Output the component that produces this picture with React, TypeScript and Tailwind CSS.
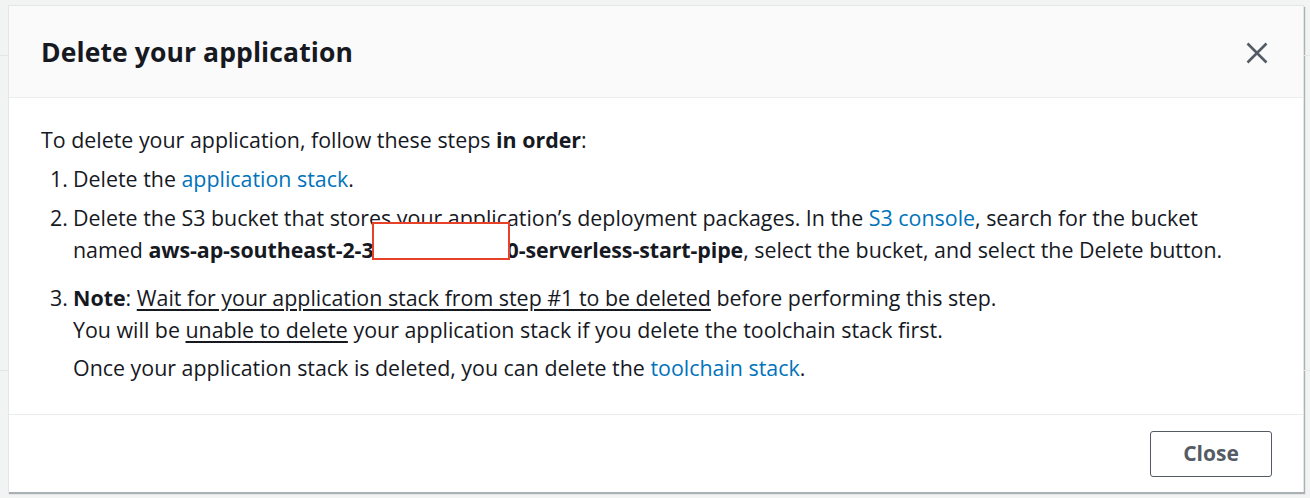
import React from "react";

export default function App() {
  const font = { fontFamily: '"Open Sans", "Noto Sans", Arial, sans-serif' };
  return (
    <div className="w-[1310px] h-[498px] bg-[#f2f3f3] relative overflow-hidden" style={font}>
      <div className="absolute left-0 top-[55px] w-[8px] h-px bg-[#e4e7e7]" />
      <div className="absolute right-0 top-[55px] w-[6px] h-px bg-[#e4e7e7]" />
      <div className="absolute right-0 top-[370px] w-[6px] h-px bg-[#e4e7e7]" />
      <div className="absolute left-0 top-[370px] w-[8px] h-px bg-[#e4e7e7]" />
      <div className="ml-[8px] pt-[5px] w-[1296px]">
        <div className="h-[487px] flex flex-col bg-white shadow-[1px_2px_1px_rgba(0,28,36,0.3)] border border-[#e4e7e7] border-b-0">
          <div className="h-[92px] bg-[#fafafa] border-b border-[#eaeded] flex items-center justify-between pl-[32px] pr-[35px]">
            <h2 className="text-[26.5px] font-bold text-[#16191f] tracking-[0.1px] pt-[2px]">Delete your application</h2>
            <svg width="22" height="22" viewBox="0 0 22 22" className="mt-[2px]">
              <path d="M1.5 1.5 L20.5 20.5 M20.5 1.5 L1.5 20.5" stroke="#545b64" strokeWidth="2.6" strokeLinecap="butt" />
            </svg>
          </div>
          <div className="flex-1 pl-[32px] pr-[30px] pt-[26px] text-[21.4px] leading-[32px] text-[#16191f] border-b border-[#eaeded]">
            <p>
              To delete your application, follow these steps <b>in order</b>:
            </p>
            <ol className="mt-[7px]">
              <li className="flex">
                <span className="w-[32px] shrink-0 pl-[9px]">1.</span>
                <span>
                  Delete the <span className="text-[#0073bb]">application stack</span>.
                </span>
              </li>
              <li className="flex mt-[7px]">
                <span className="w-[32px] shrink-0 pl-[9px]">2.</span>
                <span>
                  Delete the S3 bucket that stores your application’s deployment packages. In the{" "}
                  <span className="text-[#0073bb]">S3 console</span>, search for the bucket
                  <br />
                  named <b className="tracking-[-0.1px]">aws-ap-southeast-2-3</b>
                  <span className="relative inline-block w-[133px] h-[32px] align-top">
                    <span className="absolute left-[-2px] top-[-12px] w-[138px] h-[38px] border-2 border-[#e8412a] bg-white" />
                  </span>
                  <b className="tracking-[-0.1px]">0-serverless-start-pipe</b>, select the bucket, and select the Delete button.
                </span>
              </li>
              <li className="flex mt-[16px]">
                <span className="w-[32px] shrink-0 pl-[9px]">3.</span>
                <div>
                  <p>
                    <b>Note</b>: <u className="underline-offset-[3px]">Wait for your application stack from step #1 to be deleted</u> before performing this step.
                    <br />
                    You will be <u className="underline-offset-[3px]">unable to delete</u> your application stack if you delete the toolchain stack first.
                  </p>
                  <p className="mt-[6px]">
                    Once your application stack is deleted, you can delete the <span className="text-[#0073bb]">toolchain stack</span>.
                  </p>
                </div>
              </li>
            </ol>
          </div>
          <div className="h-[77px] flex items-center justify-end pr-[31px]">
            <button className="w-[122px] h-[46px] border border-[#545b64] rounded-[3px] text-[#545b64] text-[21px] font-bold bg-white">
              Close
            </button>
          </div>
        </div>
      </div>
    </div>
  );
}
